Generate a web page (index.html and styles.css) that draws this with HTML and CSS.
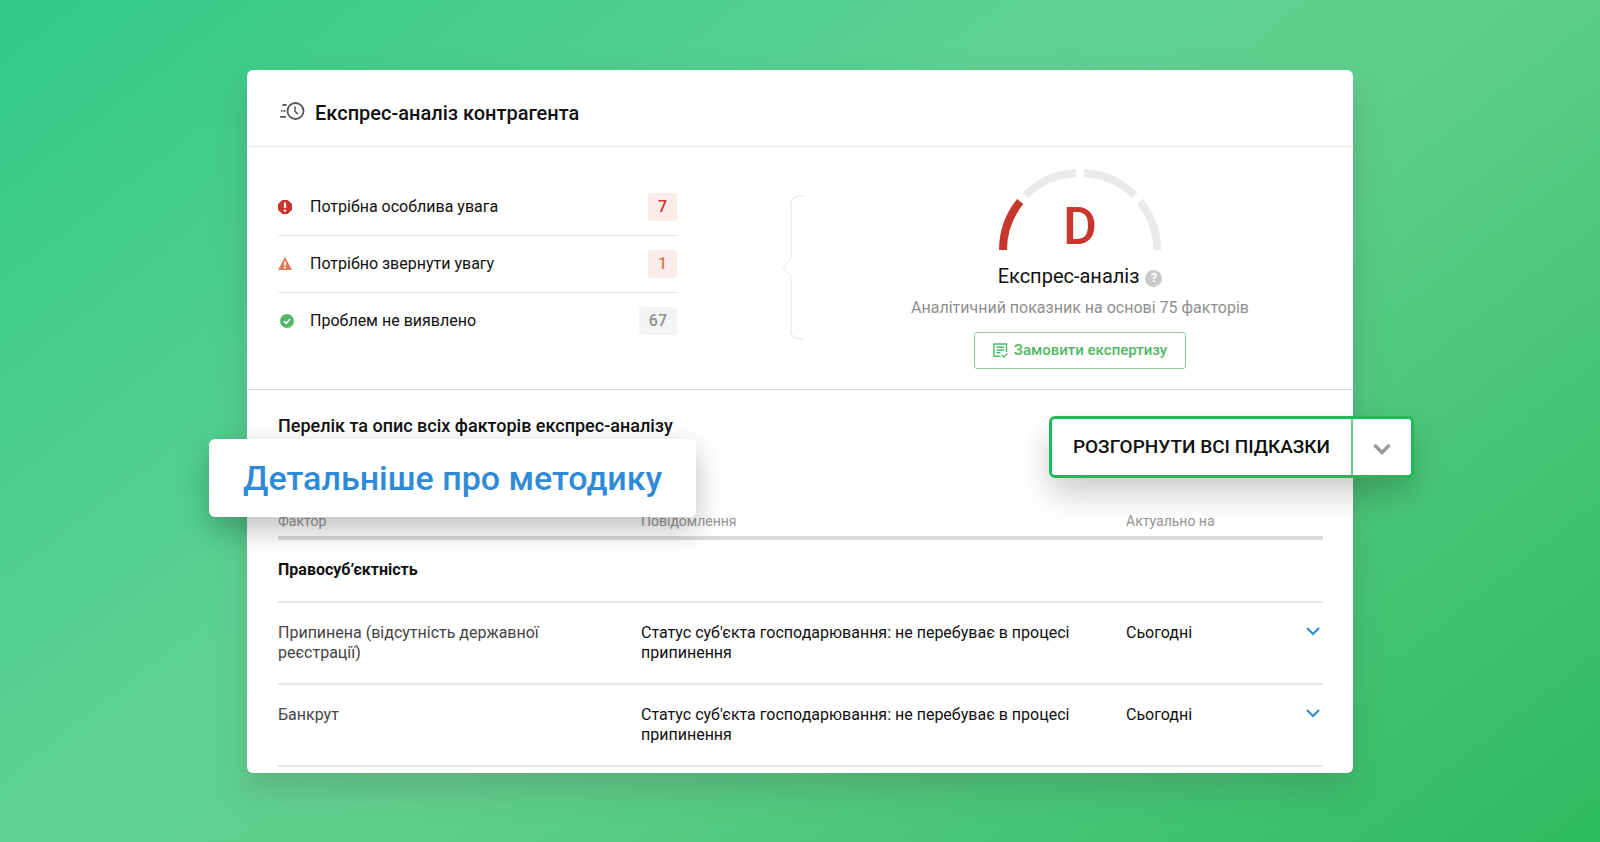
FILE: index.html
```html
<!DOCTYPE html>
<html lang="uk">
<head>
<meta charset="UTF-8" />
<meta name="viewport" content="width=device-width, initial-scale=1" />
<title>Експрес-аналіз контрагента</title>
<link rel="stylesheet" href="styles.css">
</head>
<body>
<main class="card">
  <header class="card-header">
    <svg class="header-icon" width="26" height="20" viewBox="0 0 26 20" fill="none" stroke="#5a5a5a" aria-hidden="true">
      <circle cx="16.5" cy="10" r="8" stroke-width="1.9"/>
      <path d="M16 5.5v4.7l2.8 3" stroke-width="1.6"/>
      <path d="M3.5 4h4M2 10h1.4M4.6 10h1.6M1 15.8h6" stroke-width="1.8"/>
    </svg>
    <h1>Експрес-аналіз контрагента</h1>
  </header>

  <section class="summary">
    <ul class="levels">
      <li>
        <svg width="16" height="16" viewBox="0 0 16 16" aria-hidden="true">
          <path d="M4.4 1h5.2L14 5v6l-4.4 4H4.4L0 11V5z" fill="#c8372d"/>
          <path d="M7 3.6v5.2" stroke="#fff" stroke-width="2.2"/>
          <circle cx="7" cy="11.6" r="1.2" fill="#fff"/>
        </svg>
        <span class="level-name">Потрібна особлива увага</span>
        <span class="badge badge-danger">7</span>
      </li>
      <li>
        <svg width="16" height="16" viewBox="0 0 16 16" aria-hidden="true">
          <path d="M7 1l7 13H0z" fill="#dc7b55"/>
          <path d="M7 5.5v4" stroke="#fff" stroke-width="1.8"/>
          <circle cx="7" cy="11.6" r="1" fill="#fff"/>
        </svg>
        <span class="level-name">Потрібно звернути увагу</span>
        <span class="badge badge-warning">1</span>
      </li>
      <li>
        <svg width="16" height="16" viewBox="0 0 16 16" aria-hidden="true">
          <circle cx="9" cy="8" r="7" fill="#52b866"/>
          <path d="M6 8.2l2.2 2.1 3.8-4" fill="none" stroke="#fff" stroke-width="1.6"/>
        </svg>
        <span class="level-name">Проблем не виявлено</span>
        <span class="badge">67</span>
      </li>
    </ul>

    <svg class="brace" width="22" height="146" viewBox="0 0 22 146" fill="none" stroke="#e4e6e6" aria-hidden="true">
      <path d="M22 1h-4q-9 0-9 9v54L1 72.500l8 8.500v54q0 9 9 9h4"/>
    </svg>

    <div class="rating">
      <div class="gauge">
        <svg width="162" height="81" viewBox="-81 -81 162 81" fill="none" stroke="#e9ebeb" stroke-width="8" aria-hidden="true">
          <path d="M-77 0A77 77 0 0 1-59.800-48.500" stroke="#c8372d"/>
          <path d="M-54.500-54.500A77 77 0 0 1-4-76.900"/>
          <path d="M4-76.900A77 77 0 0 1 54.500-54.500"/>
          <path d="M59.800-48.500A77 77 0 0 1 77 0"/>
        </svg>
        <span class="grade">D</span>
      </div>
      <h2 class="rating-title">Експрес-аналіз <button type="button" class="help" aria-label="Довідка">?</button></h2>
      <p class="rating-note">Аналітичний показник на основі 75 факторів</p>
      <button type="button" class="order">
        <svg width="15" height="15" viewBox="0 0 15 15" fill="none" stroke="#52b866" stroke-width="1.4" aria-hidden="true">
          <path d="M7.500 13.300H1V1h12.500v8"/>
          <path d="M3.500 4.200h7.500M3.500 7h7.500M3.500 9.800h4"/>
          <path d="M9 12l2 2 3.500-3.500"/>
        </svg>
        Замовити експертизу
      </button>
    </div>
  </section>

  <section class="factors">
    <h2 class="factors-title">Перелік та опис всіх факторів експрес-аналізу</h2>
    <table>
      <thead>
        <tr>
          <th class="col-factor" scope="col">Фактор</th>
          <th class="col-message" scope="col">Повідомлення</th>
          <th scope="col" colspan="2">Актуально на</th>
        </tr>
      </thead>
      <tbody>
        <tr class="group">
          <th scope="rowgroup" colspan="4">Правосуб’єктність</th>
        </tr>
        <tr>
          <td class="factor">Припинена (відсутність державної реєстрації)</td>
          <td class="message">Статус суб'єкта господарювання: не перебуває в процесі припинення</td>
          <td>Сьогодні</td>
          <td class="toggle">
            <button type="button" aria-label="Розгорнути">
              <svg width="14" height="9" viewBox="0 0 14 9" fill="none" stroke="#2f8bd8" stroke-width="2"><path d="M1 1l6 6 6-6"/></svg>
            </button>
          </td>
        </tr>
        <tr>
          <td class="factor">Банкрут</td>
          <td class="message">Статус суб'єкта господарювання: не перебуває в процесі припинення</td>
          <td>Сьогодні</td>
          <td class="toggle">
            <button type="button" aria-label="Розгорнути">
              <svg width="14" height="9" viewBox="0 0 14 9" fill="none" stroke="#2f8bd8" stroke-width="2"><path d="M1 1l6 6 6-6"/></svg>
            </button>
          </td>
        </tr>
      </tbody>
    </table>

    <a class="method-link" href="#">Детальніше про методику</a>

    <div class="expand">
      <button type="button" class="expand-all">РОЗГОРНУТИ ВСІ ПІДКАЗКИ</button>
      <button type="button" class="expand-more" aria-label="Більше">
        <svg width="18" height="12" viewBox="0 0 18 12" fill="none" stroke="#9a9a9a" stroke-width="3.500"><path d="M1.500 2L9 9.500 16.500 2"/></svg>
      </button>
    </div>
  </section>
</main>
</body>
</html>
```
FILE: styles.css
```css
* {
  box-sizing: border-box;
}

body {
  margin: 0;
  min-height: 100vh;
  padding: 70px 64px;
  font-family: Roboto, "Liberation Sans", sans-serif;
  font-size: 16px;
  line-height: 20px;
  color: #111;
  background: linear-gradient(142deg, #31ca87 0%, #5ed293 40%, #61cf8d 54%, #2dbc60 100%);
}

h1, h2, p, ul {
  margin: 0;
  padding: 0;
}

button {
  font-family: inherit;
  padding: 0;
  border: 0;
  background: none;
  cursor: pointer;
}

svg {
  display: block;
  flex: none;
}

.card {
  max-width: 1106px;
  margin: 0 auto;
  padding-bottom: 6px;
  background: #fff;
  border-radius: 6px;
  box-shadow: 0 16px 32px rgba(80, 90, 80, 0.26);
}

/* Header */
.card-header {
  display: flex;
  align-items: center;
  gap: 10px;
  padding: 31px 32px 21px;
  border-bottom: 1px solid #e9eaea;
}
.card-header h1 {
  font-size: 20px;
  line-height: 24px;
  font-weight: 500;
}
.header-icon {
  margin-bottom: 4px;
}

/* Summary */
.summary {
  display: flex;
  align-items: flex-start;
  padding: 22px 31px 20px;
  border-bottom: 1px solid #d9dada;
}
.levels {
  flex: 0 1 399px;
  list-style: none;
  padding-top: 10px;
}
.levels li {
  display: flex;
  align-items: center;
  gap: 16px;
  padding: 14px 0;
  border-bottom: 1px solid #e9eaea;
}
.levels li:last-child {
  border-bottom: 0;
}
.level-name {
  flex: 1;
}
.badge {
  padding: 4px 10px;
  border-radius: 3px;
  background: #f3f4f4;
  color: #8f8f8f;
  font-weight: 500;
}
.badge-danger {
  background: #fcece9;
  color: #c8372d;
}
.badge-warning {
  background: #fcece9;
  color: #dc7b55;
}
.brace {
  margin: 26px 34px 0 105px;
}

/* Rating */
.rating {
  flex: 1;
  display: flex;
  flex-direction: column;
  align-items: center;
}
.gauge {
  display: grid;
  justify-items: center;
}
.gauge svg,
.grade {
  grid-area: 1 / 1;
}
.grade {
  align-self: end;
  font-size: 52px;
  line-height: 46px;
  font-weight: 500;
  color: #c8372d;
}
.rating-title {
  display: flex;
  align-items: center;
  gap: 6px;
  margin-top: 14px;
  font-size: 20px;
  line-height: 24px;
  font-weight: 400;
}
.help {
  width: 17px;
  height: 17px;
  margin-top: 4px;
  border-radius: 50%;
  background: #c9caca;
  color: #fff;
  font-size: 12px;
  line-height: 17px;
  font-weight: 700;
}
.rating-note {
  margin-top: 10px;
  color: #8f8f8f;
}
.order {
  display: flex;
  align-items: center;
  gap: 6px;
  margin-top: 14px;
  padding: 8px 18px;
  border: 1px solid #8fcf9d;
  border-radius: 3px;
  color: #52b866;
  font-size: 15px;
  line-height: 19px;
  font-weight: 500;
}

/* Factors table */
.factors {
  position: relative;
  padding: 26px 30px 0 31px;
}
.factors-title {
  font-size: 18px;
  line-height: 20px;
  font-weight: 500;
}
table {
  width: 100%;
  margin-top: 75px;
  border-collapse: separate;
  border-spacing: 0;
  table-layout: fixed;
}
th,
td {
  padding: 20px 0;
  border-bottom: 2px solid #e6e6e6;
  text-align: left;
  vertical-align: top;
}
thead th {
  padding: 0 0 5px;
  border-bottom: 4px solid #dadada;
  color: #969696;
  font-size: 14px;
  font-weight: 400;
}
.col-factor {
  width: 363px;
}
.col-message {
  width: 485px;
}
.group th {
  padding-bottom: 21px;
  font-weight: 700;
}
.factor {
  padding-right: 80px;
  color: #444;
}
.message {
  padding-right: 50px;
}
.toggle button {
  display: block;
  margin: 4px 3px 0 auto;
}

/* Elements lying over the card */
.method-link {
  position: absolute;
  top: 49px;
  left: -38px;
  padding: 18px 34px;
  border-radius: 6px;
  background: #fff;
  box-shadow: 0 12px 30px rgba(0, 0, 0, 0.26);
  color: #2f8bd8;
  font-size: 34px;
  line-height: 42px;
  font-weight: 500;
  text-decoration: none;
}
.expand {
  position: absolute;
  top: 26px;
  right: -61px;
  display: flex;
  border: 3px solid #1dbb58;
  border-radius: 6px;
  background: #fff;
  box-shadow: 0 16px 32px rgba(0, 0, 0, 0.2);
}
.expand-all {
  padding: 16px 21px;
  color: #111;
  font-size: 19px;
  line-height: 24px;
  font-weight: 500;
}
.expand-more {
  display: flex;
  align-items: center;
  justify-content: center;
  width: 60px;
  padding-top: 4px;
  border-left: 2px solid #6cc98a;
}
```
